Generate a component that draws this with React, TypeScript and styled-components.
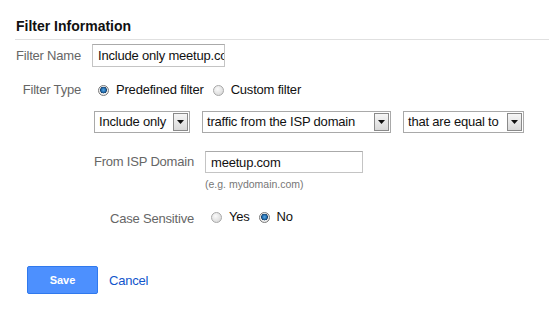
import React from "react";
import styled, {createGlobalStyle} from "styled-components";

const GlobalStyle = createGlobalStyle`
    html, body {
        margin: 0;
        padding: 0;
        background: #FFFFFF;
    }
    body {
        font-family: "Liberation Sans", Arial, sans-serif;
        font-size: 13px;
        letter-spacing: -0.2px;
        color: #222222;
    }
`

const App: React.FC = function () {
    return (
        <Page>
            <GlobalStyle/>
            <Title>Filter Information</Title>

            <Field labelWidth={66} top={4}>
                <Label>Filter Name</Label>
                <TextInput width={133} height={23} readOnly value="Include only meetup.co"/>
            </Field>

            <Field labelWidth={66} top={14}>
                <Label>Filter Type</Label>
                <RadioGroup>
                    <Radio checked label="Predefined filter"/>
                    <Radio label="Custom filter"/>
                </RadioGroup>
            </Field>

            <Field labelWidth={66} top={12}>
                <span/>
                <SelectRow>
                    <Select width={96} text="Include only"/>
                    <Select width={189} text="traffic from the ISP domain"/>
                    <Select width={121} text="that are equal to"/>
                </SelectRow>
            </Field>

            <Field labelWidth={179} top={18}>
                <Label>From ISP Domain</Label>
                <TextInput width={158} height={22} readOnly value="meetup.com"/>
            </Field>

            <Field labelWidth={179} top={5}>
                <span/>
                <Hint>(e.g. mydomain.com)</Hint>
            </Field>

            <Field labelWidth={179} top={17}>
                <Label low>Case Sensitive</Label>
                <RadioGroup>
                    <Radio label="Yes"/>
                    <Radio checked label="No"/>
                </RadioGroup>
            </Field>

            <Actions>
                <SaveButton>Save</SaveButton>
                <CancelLink href="#">Cancel</CancelLink>
            </Actions>
        </Page>
    )
}

export default App

const Radio: React.FC<RadioPropsType> = function ({checked, label}) {
    return (
        <RadioOption>
            <RadioDot checked={checked}/>
            <span>{label}</span>
        </RadioOption>
    )
}

const Select: React.FC<SelectPropsType> = function ({width, text}) {
    return (
        <SelectBox style={{width}}>
            <SelectText>{text}</SelectText>
            <SelectArrow>
                <svg width="7" height="4" viewBox="0 0 7 4">
                    <path d="M0 0 H7 L3.5 4 Z" fill="#111111"/>
                </svg>
            </SelectArrow>
        </SelectBox>
    )
}

const Page = styled.div`
    width: 549px;
    height: 310px;
    box-sizing: border-box;
    padding-left: 15px;
    overflow: hidden;
`
const Title = styled.h1`
    margin: 0;
    padding: 18px 0 5px 1px;
    font-size: 14px;
    line-height: 16px;
    font-weight: 700;
    letter-spacing: 0;
    color: #111111;
    border-bottom: 1px solid #E0E0E0;
`
const Field = styled.div<{labelWidth: number, top: number}>`
    display: grid;
    grid-template-columns: ${props => props.labelWidth}px auto;
    column-gap: 11px;
    align-items: center;
    justify-content: start;
    margin-top: ${props => props.top}px;
`
const Label = styled.label<{low?: boolean}>`
    text-align: right;
    white-space: nowrap;
    color: #666666;
    font-size: 13px;
    line-height: 18px;
    position: relative;
    top: ${props => props.low ? 2 : 0}px;
`
const TextInput = styled.input<{width: number, height: number}>`
    width: ${props => props.width}px;
    height: ${props => props.height}px;
    box-sizing: border-box;
    margin: 0;
    padding: 0 0 0 5px;
    border: 1px solid #C4C4C4;
    border-top-color: #AAAAAA;
    font-family: "Liberation Sans", Arial, sans-serif;
    font-size: 13px;
    letter-spacing: -0.2px;
    color: #111111;
    background: #FFFFFF;
    outline: none;
`
const RadioGroup = styled.div`
    display: flex;
    align-items: center;
    gap: 9px;
    padding-left: 6px;
    height: 18px;
`
const RadioOption = styled.label`
    display: flex;
    align-items: center;
    gap: 7px;
    color: #111111;
    font-size: 13px;
    line-height: 18px;
    white-space: nowrap;
`
const RadioDot = styled.span<{checked?: boolean}>`
    width: 11px;
    height: 11px;
    box-sizing: border-box;
    border-radius: 50%;
    border: 1px solid ${props => props.checked ? "#7A7A7A" : "#A8A8A8"};
    background: ${props => props.checked
        ? "radial-gradient(circle at 50% 45%, #5FA8E0 0, #1F6DB0 2.2px, #1B3F66 3.2px, #F2F2F2 3.6px, #D6D6D6 100%)"
        : "radial-gradient(circle at 40% 35%, #FAFAFA 0, #E2E2E2 60%, #CFCFCF 100%)"};
    flex: none;
`
const SelectRow = styled.div`
    display: flex;
    gap: 12px;
    margin-left: 2px;
`
const SelectBox = styled.div`
    display: flex;
    align-items: stretch;
    height: 22px;
    box-sizing: border-box;
    border: 1px solid #A9A9A9;
    background: #FFFFFF;
`
const SelectText = styled.span`
    flex: 1;
    padding-left: 4px;
    font-size: 13px;
    line-height: 20px;
    color: #111111;
    white-space: nowrap;
    overflow: hidden;
`
const SelectArrow = styled.span`
    width: 15px;
    margin: 1px;
    box-sizing: border-box;
    border: 1px solid #8A8A8A;
    background: linear-gradient(#F6F6F6, #D9D9D9);
    display: flex;
    align-items: center;
    justify-content: center;
`
const Hint = styled.div`
    font-size: 10.5px;
    line-height: 13px;
    letter-spacing: 0;
    color: #777777;
`
const Actions = styled.div`
    display: flex;
    align-items: center;
    gap: 11px;
    margin-top: 40px;
    margin-left: 12px;
`
const SaveButton = styled.button`
    width: 71px;
    height: 28px;
    border: 1px solid #3079ED;
    border-radius: 2px;
    background: #4D90FE;
    color: #FFFFFF;
    font-family: "Liberation Sans", Arial, sans-serif;
    font-size: 11px;
    font-weight: 700;
    padding: 0;
`
const CancelLink = styled.a`
    color: #1155CC;
    font-size: 13px;
    text-decoration: none;
`

type RadioPropsType = {
    checked?: boolean
    label: string
}

type SelectPropsType = {
    width: number
    text: string
}
